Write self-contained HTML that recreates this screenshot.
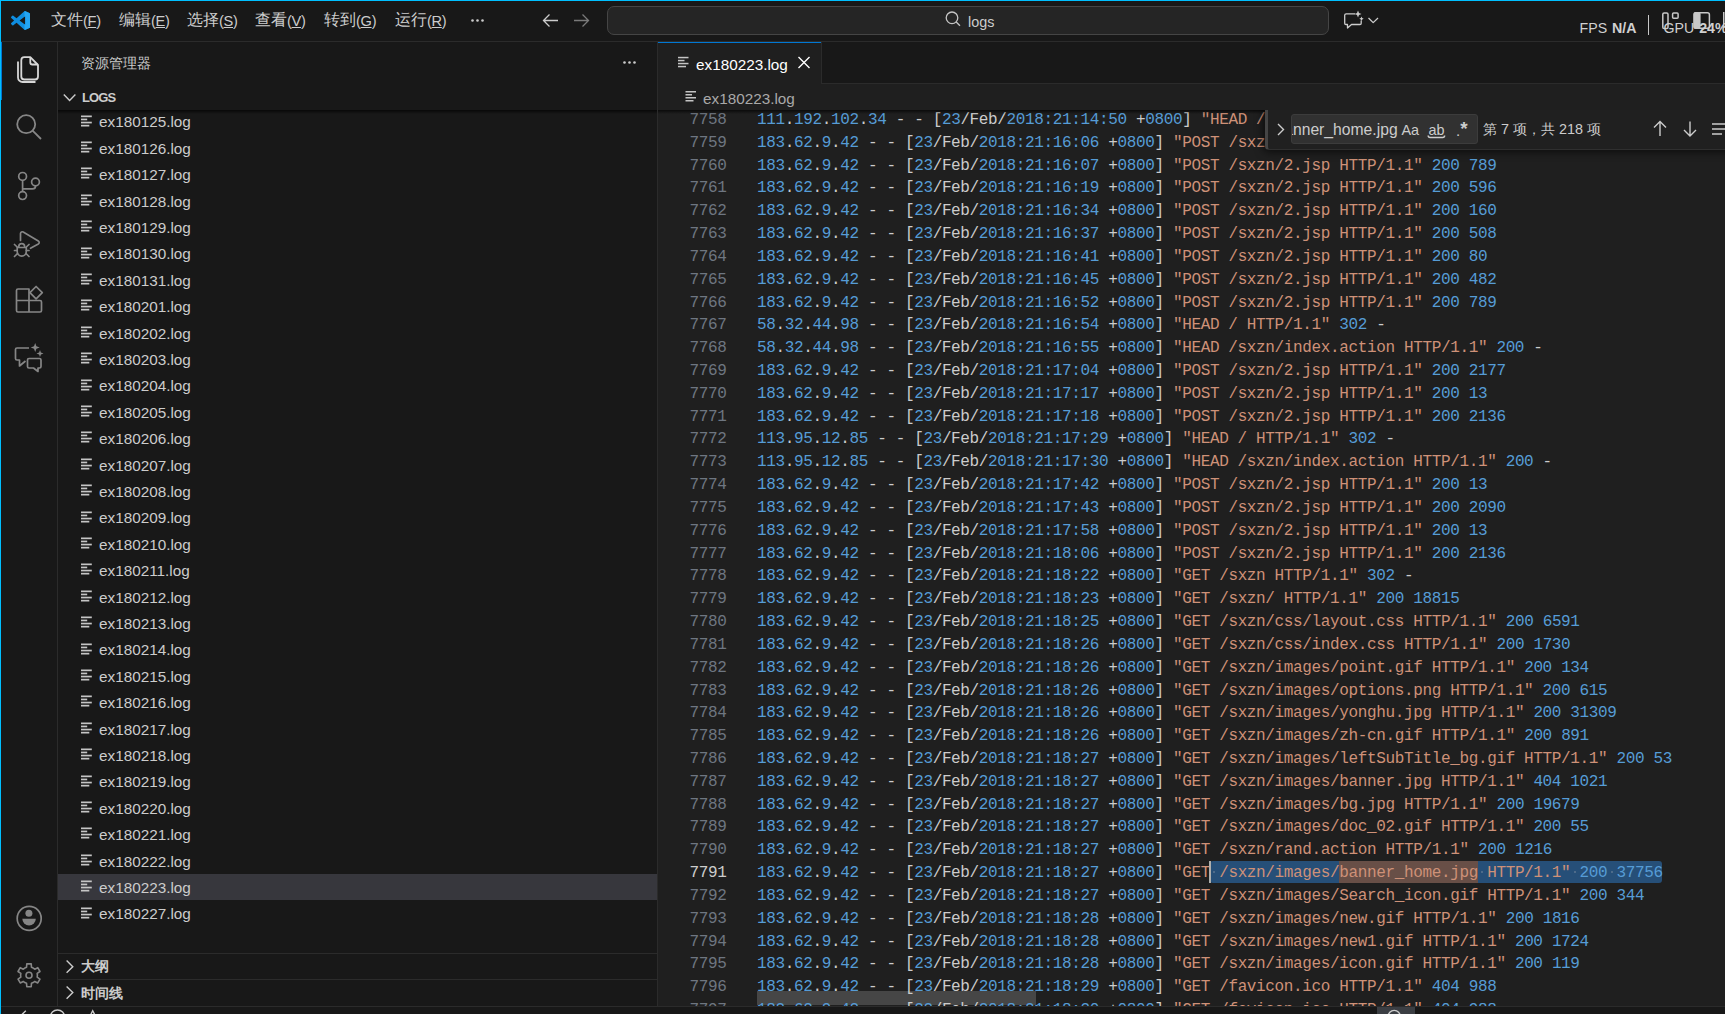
<!DOCTYPE html><html><head><meta charset="utf-8"><style>
*{margin:0;padding:0;box-sizing:border-box}
html,body{width:1725px;height:1014px;overflow:hidden;background:#181818;font-family:"Liberation Sans",sans-serif;color:#cccccc}
.abs{position:absolute}
svg{overflow:visible}
.menu{position:absolute;top:9px;font-size:15.6px;color:#cccccc;line-height:22px;white-space:nowrap}
.ln{position:absolute;left:658px;width:68.5px;text-align:right;font-family:"Liberation Mono",monospace;font-size:16px;letter-spacing:-0.36px;line-height:22.8px;color:#6e7681;white-space:pre}
.ln.cur{color:#cccccc}
.cl{position:absolute;left:757px;font-family:"Liberation Mono",monospace;font-size:16px;letter-spacing:-0.36px;line-height:22.8px;color:#cccccc;white-space:pre}
.b{color:#569cd6}
.o{color:#ce9178}
.fl{position:absolute;left:99px;height:26.4px;line-height:26.4px;font-size:15.3px;color:#cccccc;white-space:nowrap}
.hdr{position:absolute;font-size:13px;letter-spacing:-0.85px;font-weight:bold;color:#cccccc;white-space:nowrap;line-height:16px}
.hdrc{position:absolute;font-size:14px;font-weight:bold;color:#cccccc;white-space:nowrap;line-height:16px}
.tabt{position:absolute;font-size:15.3px;color:#ffffff;white-space:nowrap;line-height:22px}
.crt{position:absolute;font-size:15.3px;color:#a9a9a9;white-space:nowrap;line-height:22px}
.sbt{position:absolute;font-size:14px;color:#cccccc;white-space:nowrap;line-height:16px}
.fwt{position:absolute;font-size:15.3px;color:#cccccc;white-space:nowrap;line-height:20px}
.fwa{position:absolute;font-size:15px;color:#cccccc;white-space:nowrap;line-height:20px}
.fwc{position:absolute;font-size:14.4px;color:#cccccc;white-space:nowrap;line-height:20px}
.srch{position:absolute;font-size:14.4px;color:#cccccc;white-space:nowrap;line-height:20px}
.fps{position:absolute;font-size:14.2px;color:#d0d0d0;white-space:nowrap;line-height:20px}

</style></head><body>
<div class="abs" style="left:0;top:0;width:1725px;height:42px;background:#181818"></div>
<div class="abs" style="left:0;top:41px;width:1725px;height:1px;background:#2b2b2b"></div>
<div class="abs" style="left:57px;top:42px;width:1px;height:964px;background:#2b2b2b"></div>
<div class="abs" style="left:657px;top:42px;width:1px;height:964px;background:#2b2b2b"></div>
<div class="abs" style="left:658px;top:84px;width:1067px;height:922px;background:#1f1f1f"></div>
<div class="abs" style="left:658px;top:42px;width:1067px;height:42px;background:#181818;border-bottom:1px solid #2b2b2b"></div>
<div class="abs" style="left:658px;top:42px;width:164px;height:42px;background:#1f1f1f;border-right:1px solid #2b2b2b"></div>
<div class="abs" style="left:658px;top:42px;width:163px;height:1px;background:#0078d4"></div>
<div class="tabt" style="left:696px;top:53.5px">ex180223.log</div>
<div class="crt" style="left:703px;top:87.5px">ex180223.log</div>
<div class="abs" style="left:1210px;top:861.0px;width:451.7px;height:22px;background:#264f78;border-radius:3px"></div>
<div class="abs" style="left:1339px;top:861.0px;width:138.6px;height:22px;background:#684f47"></div>
<div class="abs" style="left:757px;top:991px;width:279px;height:14px;background:#464646"></div>
<div class="ln" style="top:108.5px">7758</div>
<div class="cl" style="top:108.5px"><span class="b">111</span>.<span class="b">192</span>.<span class="b">102</span>.<span class="b">34</span> - - [<span class="b">23</span>/Feb/<span class="b">2018:21:14:50</span> +<span class="b">0800</span>] <span class="o">"HEAD / HTTP/1.1"</span> <span class="b">302</span> -</div>
<div class="ln" style="top:131.5px">7759</div>
<div class="cl" style="top:131.5px"><span class="b">183</span>.<span class="b">62</span>.<span class="b">9</span>.<span class="b">42</span> - - [<span class="b">23</span>/Feb/<span class="b">2018:21:16:06</span> +<span class="b">0800</span>] <span class="o">"POST /sxzn/2.jsp HTTP/1.1"</span> <span class="b">200</span> <span class="b">2136</span></div>
<div class="ln" style="top:154.5px">7760</div>
<div class="cl" style="top:154.5px"><span class="b">183</span>.<span class="b">62</span>.<span class="b">9</span>.<span class="b">42</span> - - [<span class="b">23</span>/Feb/<span class="b">2018:21:16:07</span> +<span class="b">0800</span>] <span class="o">"POST /sxzn/2.jsp HTTP/1.1"</span> <span class="b">200</span> <span class="b">789</span></div>
<div class="ln" style="top:176.5px">7761</div>
<div class="cl" style="top:176.5px"><span class="b">183</span>.<span class="b">62</span>.<span class="b">9</span>.<span class="b">42</span> - - [<span class="b">23</span>/Feb/<span class="b">2018:21:16:19</span> +<span class="b">0800</span>] <span class="o">"POST /sxzn/2.jsp HTTP/1.1"</span> <span class="b">200</span> <span class="b">596</span></div>
<div class="ln" style="top:199.5px">7762</div>
<div class="cl" style="top:199.5px"><span class="b">183</span>.<span class="b">62</span>.<span class="b">9</span>.<span class="b">42</span> - - [<span class="b">23</span>/Feb/<span class="b">2018:21:16:34</span> +<span class="b">0800</span>] <span class="o">"POST /sxzn/2.jsp HTTP/1.1"</span> <span class="b">200</span> <span class="b">160</span></div>
<div class="ln" style="top:222.5px">7763</div>
<div class="cl" style="top:222.5px"><span class="b">183</span>.<span class="b">62</span>.<span class="b">9</span>.<span class="b">42</span> - - [<span class="b">23</span>/Feb/<span class="b">2018:21:16:37</span> +<span class="b">0800</span>] <span class="o">"POST /sxzn/2.jsp HTTP/1.1"</span> <span class="b">200</span> <span class="b">508</span></div>
<div class="ln" style="top:245.5px">7764</div>
<div class="cl" style="top:245.5px"><span class="b">183</span>.<span class="b">62</span>.<span class="b">9</span>.<span class="b">42</span> - - [<span class="b">23</span>/Feb/<span class="b">2018:21:16:41</span> +<span class="b">0800</span>] <span class="o">"POST /sxzn/2.jsp HTTP/1.1"</span> <span class="b">200</span> <span class="b">80</span></div>
<div class="ln" style="top:268.5px">7765</div>
<div class="cl" style="top:268.5px"><span class="b">183</span>.<span class="b">62</span>.<span class="b">9</span>.<span class="b">42</span> - - [<span class="b">23</span>/Feb/<span class="b">2018:21:16:45</span> +<span class="b">0800</span>] <span class="o">"POST /sxzn/2.jsp HTTP/1.1"</span> <span class="b">200</span> <span class="b">482</span></div>
<div class="ln" style="top:291.5px">7766</div>
<div class="cl" style="top:291.5px"><span class="b">183</span>.<span class="b">62</span>.<span class="b">9</span>.<span class="b">42</span> - - [<span class="b">23</span>/Feb/<span class="b">2018:21:16:52</span> +<span class="b">0800</span>] <span class="o">"POST /sxzn/2.jsp HTTP/1.1"</span> <span class="b">200</span> <span class="b">789</span></div>
<div class="ln" style="top:313.5px">7767</div>
<div class="cl" style="top:313.5px"><span class="b">58</span>.<span class="b">32</span>.<span class="b">44</span>.<span class="b">98</span> - - [<span class="b">23</span>/Feb/<span class="b">2018:21:16:54</span> +<span class="b">0800</span>] <span class="o">"HEAD / HTTP/1.1"</span> <span class="b">302</span> -</div>
<div class="ln" style="top:336.5px">7768</div>
<div class="cl" style="top:336.5px"><span class="b">58</span>.<span class="b">32</span>.<span class="b">44</span>.<span class="b">98</span> - - [<span class="b">23</span>/Feb/<span class="b">2018:21:16:55</span> +<span class="b">0800</span>] <span class="o">"HEAD /sxzn/index.action HTTP/1.1"</span> <span class="b">200</span> -</div>
<div class="ln" style="top:359.5px">7769</div>
<div class="cl" style="top:359.5px"><span class="b">183</span>.<span class="b">62</span>.<span class="b">9</span>.<span class="b">42</span> - - [<span class="b">23</span>/Feb/<span class="b">2018:21:17:04</span> +<span class="b">0800</span>] <span class="o">"POST /sxzn/2.jsp HTTP/1.1"</span> <span class="b">200</span> <span class="b">2177</span></div>
<div class="ln" style="top:382.5px">7770</div>
<div class="cl" style="top:382.5px"><span class="b">183</span>.<span class="b">62</span>.<span class="b">9</span>.<span class="b">42</span> - - [<span class="b">23</span>/Feb/<span class="b">2018:21:17:17</span> +<span class="b">0800</span>] <span class="o">"POST /sxzn/2.jsp HTTP/1.1"</span> <span class="b">200</span> <span class="b">13</span></div>
<div class="ln" style="top:405.5px">7771</div>
<div class="cl" style="top:405.5px"><span class="b">183</span>.<span class="b">62</span>.<span class="b">9</span>.<span class="b">42</span> - - [<span class="b">23</span>/Feb/<span class="b">2018:21:17:18</span> +<span class="b">0800</span>] <span class="o">"POST /sxzn/2.jsp HTTP/1.1"</span> <span class="b">200</span> <span class="b">2136</span></div>
<div class="ln" style="top:427.5px">7772</div>
<div class="cl" style="top:427.5px"><span class="b">113</span>.<span class="b">95</span>.<span class="b">12</span>.<span class="b">85</span> - - [<span class="b">23</span>/Feb/<span class="b">2018:21:17:29</span> +<span class="b">0800</span>] <span class="o">"HEAD / HTTP/1.1"</span> <span class="b">302</span> -</div>
<div class="ln" style="top:450.5px">7773</div>
<div class="cl" style="top:450.5px"><span class="b">113</span>.<span class="b">95</span>.<span class="b">12</span>.<span class="b">85</span> - - [<span class="b">23</span>/Feb/<span class="b">2018:21:17:30</span> +<span class="b">0800</span>] <span class="o">"HEAD /sxzn/index.action HTTP/1.1"</span> <span class="b">200</span> -</div>
<div class="ln" style="top:473.5px">7774</div>
<div class="cl" style="top:473.5px"><span class="b">183</span>.<span class="b">62</span>.<span class="b">9</span>.<span class="b">42</span> - - [<span class="b">23</span>/Feb/<span class="b">2018:21:17:42</span> +<span class="b">0800</span>] <span class="o">"POST /sxzn/2.jsp HTTP/1.1"</span> <span class="b">200</span> <span class="b">13</span></div>
<div class="ln" style="top:496.5px">7775</div>
<div class="cl" style="top:496.5px"><span class="b">183</span>.<span class="b">62</span>.<span class="b">9</span>.<span class="b">42</span> - - [<span class="b">23</span>/Feb/<span class="b">2018:21:17:43</span> +<span class="b">0800</span>] <span class="o">"POST /sxzn/2.jsp HTTP/1.1"</span> <span class="b">200</span> <span class="b">2090</span></div>
<div class="ln" style="top:519.5px">7776</div>
<div class="cl" style="top:519.5px"><span class="b">183</span>.<span class="b">62</span>.<span class="b">9</span>.<span class="b">42</span> - - [<span class="b">23</span>/Feb/<span class="b">2018:21:17:58</span> +<span class="b">0800</span>] <span class="o">"POST /sxzn/2.jsp HTTP/1.1"</span> <span class="b">200</span> <span class="b">13</span></div>
<div class="ln" style="top:542.5px">7777</div>
<div class="cl" style="top:542.5px"><span class="b">183</span>.<span class="b">62</span>.<span class="b">9</span>.<span class="b">42</span> - - [<span class="b">23</span>/Feb/<span class="b">2018:21:18:06</span> +<span class="b">0800</span>] <span class="o">"POST /sxzn/2.jsp HTTP/1.1"</span> <span class="b">200</span> <span class="b">2136</span></div>
<div class="ln" style="top:564.5px">7778</div>
<div class="cl" style="top:564.5px"><span class="b">183</span>.<span class="b">62</span>.<span class="b">9</span>.<span class="b">42</span> - - [<span class="b">23</span>/Feb/<span class="b">2018:21:18:22</span> +<span class="b">0800</span>] <span class="o">"GET /sxzn HTTP/1.1"</span> <span class="b">302</span> -</div>
<div class="ln" style="top:587.5px">7779</div>
<div class="cl" style="top:587.5px"><span class="b">183</span>.<span class="b">62</span>.<span class="b">9</span>.<span class="b">42</span> - - [<span class="b">23</span>/Feb/<span class="b">2018:21:18:23</span> +<span class="b">0800</span>] <span class="o">"GET /sxzn/ HTTP/1.1"</span> <span class="b">200</span> <span class="b">18815</span></div>
<div class="ln" style="top:610.5px">7780</div>
<div class="cl" style="top:610.5px"><span class="b">183</span>.<span class="b">62</span>.<span class="b">9</span>.<span class="b">42</span> - - [<span class="b">23</span>/Feb/<span class="b">2018:21:18:25</span> +<span class="b">0800</span>] <span class="o">"GET /sxzn/css/layout.css HTTP/1.1"</span> <span class="b">200</span> <span class="b">6591</span></div>
<div class="ln" style="top:633.5px">7781</div>
<div class="cl" style="top:633.5px"><span class="b">183</span>.<span class="b">62</span>.<span class="b">9</span>.<span class="b">42</span> - - [<span class="b">23</span>/Feb/<span class="b">2018:21:18:26</span> +<span class="b">0800</span>] <span class="o">"GET /sxzn/css/index.css HTTP/1.1"</span> <span class="b">200</span> <span class="b">1730</span></div>
<div class="ln" style="top:656.5px">7782</div>
<div class="cl" style="top:656.5px"><span class="b">183</span>.<span class="b">62</span>.<span class="b">9</span>.<span class="b">42</span> - - [<span class="b">23</span>/Feb/<span class="b">2018:21:18:26</span> +<span class="b">0800</span>] <span class="o">"GET /sxzn/images/point.gif HTTP/1.1"</span> <span class="b">200</span> <span class="b">134</span></div>
<div class="ln" style="top:679.5px">7783</div>
<div class="cl" style="top:679.5px"><span class="b">183</span>.<span class="b">62</span>.<span class="b">9</span>.<span class="b">42</span> - - [<span class="b">23</span>/Feb/<span class="b">2018:21:18:26</span> +<span class="b">0800</span>] <span class="o">"GET /sxzn/images/options.png HTTP/1.1"</span> <span class="b">200</span> <span class="b">615</span></div>
<div class="ln" style="top:701.5px">7784</div>
<div class="cl" style="top:701.5px"><span class="b">183</span>.<span class="b">62</span>.<span class="b">9</span>.<span class="b">42</span> - - [<span class="b">23</span>/Feb/<span class="b">2018:21:18:26</span> +<span class="b">0800</span>] <span class="o">"GET /sxzn/images/yonghu.jpg HTTP/1.1"</span> <span class="b">200</span> <span class="b">31309</span></div>
<div class="ln" style="top:724.5px">7785</div>
<div class="cl" style="top:724.5px"><span class="b">183</span>.<span class="b">62</span>.<span class="b">9</span>.<span class="b">42</span> - - [<span class="b">23</span>/Feb/<span class="b">2018:21:18:26</span> +<span class="b">0800</span>] <span class="o">"GET /sxzn/images/zh-cn.gif HTTP/1.1"</span> <span class="b">200</span> <span class="b">891</span></div>
<div class="ln" style="top:747.5px">7786</div>
<div class="cl" style="top:747.5px"><span class="b">183</span>.<span class="b">62</span>.<span class="b">9</span>.<span class="b">42</span> - - [<span class="b">23</span>/Feb/<span class="b">2018:21:18:27</span> +<span class="b">0800</span>] <span class="o">"GET /sxzn/images/leftSubTitle_bg.gif HTTP/1.1"</span> <span class="b">200</span> <span class="b">53</span></div>
<div class="ln" style="top:770.5px">7787</div>
<div class="cl" style="top:770.5px"><span class="b">183</span>.<span class="b">62</span>.<span class="b">9</span>.<span class="b">42</span> - - [<span class="b">23</span>/Feb/<span class="b">2018:21:18:27</span> +<span class="b">0800</span>] <span class="o">"GET /sxzn/images/banner.jpg HTTP/1.1"</span> <span class="b">404</span> <span class="b">1021</span></div>
<div class="ln" style="top:793.5px">7788</div>
<div class="cl" style="top:793.5px"><span class="b">183</span>.<span class="b">62</span>.<span class="b">9</span>.<span class="b">42</span> - - [<span class="b">23</span>/Feb/<span class="b">2018:21:18:27</span> +<span class="b">0800</span>] <span class="o">"GET /sxzn/images/bg.jpg HTTP/1.1"</span> <span class="b">200</span> <span class="b">19679</span></div>
<div class="ln" style="top:815.5px">7789</div>
<div class="cl" style="top:815.5px"><span class="b">183</span>.<span class="b">62</span>.<span class="b">9</span>.<span class="b">42</span> - - [<span class="b">23</span>/Feb/<span class="b">2018:21:18:27</span> +<span class="b">0800</span>] <span class="o">"GET /sxzn/images/doc_02.gif HTTP/1.1"</span> <span class="b">200</span> <span class="b">55</span></div>
<div class="ln" style="top:838.5px">7790</div>
<div class="cl" style="top:838.5px"><span class="b">183</span>.<span class="b">62</span>.<span class="b">9</span>.<span class="b">42</span> - - [<span class="b">23</span>/Feb/<span class="b">2018:21:18:27</span> +<span class="b">0800</span>] <span class="o">"GET /sxzn/rand.action HTTP/1.1"</span> <span class="b">200</span> <span class="b">1216</span></div>
<div class="ln cur" style="top:861.5px">7791</div>
<div class="cl" style="top:861.5px"><span class="b">183</span>.<span class="b">62</span>.<span class="b">9</span>.<span class="b">42</span> - - [<span class="b">23</span>/Feb/<span class="b">2018:21:18:27</span> +<span class="b">0800</span>] <span class="o">"GET /sxzn/images/banner_home.jpg HTTP/1.1"</span> <span class="b">200</span> <span class="b">37756</span></div>
<div class="ln" style="top:884.5px">7792</div>
<div class="cl" style="top:884.5px"><span class="b">183</span>.<span class="b">62</span>.<span class="b">9</span>.<span class="b">42</span> - - [<span class="b">23</span>/Feb/<span class="b">2018:21:18:27</span> +<span class="b">0800</span>] <span class="o">"GET /sxzn/images/Search_icon.gif HTTP/1.1"</span> <span class="b">200</span> <span class="b">344</span></div>
<div class="ln" style="top:907.5px">7793</div>
<div class="cl" style="top:907.5px"><span class="b">183</span>.<span class="b">62</span>.<span class="b">9</span>.<span class="b">42</span> - - [<span class="b">23</span>/Feb/<span class="b">2018:21:18:28</span> +<span class="b">0800</span>] <span class="o">"GET /sxzn/images/new.gif HTTP/1.1"</span> <span class="b">200</span> <span class="b">1816</span></div>
<div class="ln" style="top:930.5px">7794</div>
<div class="cl" style="top:930.5px"><span class="b">183</span>.<span class="b">62</span>.<span class="b">9</span>.<span class="b">42</span> - - [<span class="b">23</span>/Feb/<span class="b">2018:21:18:28</span> +<span class="b">0800</span>] <span class="o">"GET /sxzn/images/new1.gif HTTP/1.1"</span> <span class="b">200</span> <span class="b">1724</span></div>
<div class="ln" style="top:952.5px">7795</div>
<div class="cl" style="top:952.5px"><span class="b">183</span>.<span class="b">62</span>.<span class="b">9</span>.<span class="b">42</span> - - [<span class="b">23</span>/Feb/<span class="b">2018:21:18:28</span> +<span class="b">0800</span>] <span class="o">"GET /sxzn/images/icon.gif HTTP/1.1"</span> <span class="b">200</span> <span class="b">119</span></div>
<div class="ln" style="top:975.5px">7796</div>
<div class="cl" style="top:975.5px"><span class="b">183</span>.<span class="b">62</span>.<span class="b">9</span>.<span class="b">42</span> - - [<span class="b">23</span>/Feb/<span class="b">2018:21:18:29</span> +<span class="b">0800</span>] <span class="o">"GET /favicon.ico HTTP/1.1"</span> <span class="b">404</span> <span class="b">988</span></div>
<div class="ln" style="top:998.5px">7797</div>
<div class="cl" style="top:998.5px"><span class="b">183</span>.<span class="b">62</span>.<span class="b">9</span>.<span class="b">42</span> - - [<span class="b">23</span>/Feb/<span class="b">2018:21:18:30</span> +<span class="b">0800</span>] <span class="o">"GET /favicon.ico HTTP/1.1"</span> <span class="b">404</span> <span class="b">988</span></div>
<div class="abs" style="left:1209px;top:861.0px;width:2px;height:22px;background:#aeafad"></div>
<div class="abs" style="left:1213.4px;top:870.9px;width:2px;height:2px;background:#4d6b8a"></div>
<div class="abs" style="left:1481.3px;top:870.9px;width:2px;height:2px;background:#4d6b8a"></div>
<div class="abs" style="left:1573.7px;top:870.9px;width:2px;height:2px;background:#4d6b8a"></div>
<div class="abs" style="left:1610.7px;top:870.9px;width:2px;height:2px;background:#4d6b8a"></div>
<div class="abs" style="left:658px;top:110px;width:1067px;height:4px;background:linear-gradient(#000000aa,#00000000)"></div>
<div class="abs" style="left:1200px;top:110px;width:525px;height:80px;overflow:hidden"><div class="abs" style="left:65px;top:0;width:470px;height:40px;background:#202020;border-left:3px solid #454545;border-bottom:1px solid #2f2f2f;border-radius:0 0 0 4px;box-shadow:0 0 8px 2px rgba(0,0,0,0.6)"></div></div>
<div class="abs" style="left:1291px;top:114px;width:187px;height:30px;background:#313131;border:1px solid #3c3c3c;border-radius:3px;overflow:hidden"><div class="fwt" style="left:-16.5px;top:5px;font-size:15.7px">banner_home.jpg</div></div>
<div class="fwa" style="left:1401.5px;top:120px;font-size:14.4px">Aa</div>
<div class="fwa" style="left:1428.5px;top:120px;font-size:14.4px">ab</div>
<div class="fwa" style="left:1456px;top:120px;font-size:15px">.<span style="font-size:19px;position:relative;top:-1px;font-weight:bold">*</span></div>
<div class="fwc" style="left:1483px;top:119px">第 7 项，共 218 项</div>
<div class="sbt" style="left:81px;top:55px">资源管理器</div>
<div class="hdr" style="left:82px;top:89.5px">LOGS</div>
<div class="hdrc" style="left:81px;top:958px">大纲</div>
<div class="hdrc" style="left:81px;top:984.5px">时间线</div>
<div class="abs" style="left:58px;top:953px;width:599px;height:1px;background:#2b2b2b"></div>
<div class="abs" style="left:58px;top:979px;width:599px;height:1px;background:#2b2b2b"></div>
<div class="abs" style="left:58px;top:110px;width:599px;height:4px;background:linear-gradient(#000000aa,#00000000)"></div>
<svg class="abs" style="left:81px;top:114.5px" width="12" height="12" viewBox="0 0 12 12"><g fill="#c5c5c5"><rect x="0" y="0.5" width="10.8" height="1.7"/><rect x="0" y="3.6" width="6.2" height="1.7"/><rect x="0" y="6.7" width="10.8" height="1.7"/><rect x="0" y="9.8" width="8.3" height="1.7"/></g></svg>
<div class="fl" style="top:109.4px">ex180125.log</div>
<svg class="abs" style="left:81px;top:140.9px" width="12" height="12" viewBox="0 0 12 12"><g fill="#c5c5c5"><rect x="0" y="0.5" width="10.8" height="1.7"/><rect x="0" y="3.6" width="6.2" height="1.7"/><rect x="0" y="6.7" width="10.8" height="1.7"/><rect x="0" y="9.8" width="8.3" height="1.7"/></g></svg>
<div class="fl" style="top:135.8px">ex180126.log</div>
<svg class="abs" style="left:81px;top:167.29999999999998px" width="12" height="12" viewBox="0 0 12 12"><g fill="#c5c5c5"><rect x="0" y="0.5" width="10.8" height="1.7"/><rect x="0" y="3.6" width="6.2" height="1.7"/><rect x="0" y="6.7" width="10.8" height="1.7"/><rect x="0" y="9.8" width="8.3" height="1.7"/></g></svg>
<div class="fl" style="top:162.2px">ex180127.log</div>
<svg class="abs" style="left:81px;top:193.7px" width="12" height="12" viewBox="0 0 12 12"><g fill="#c5c5c5"><rect x="0" y="0.5" width="10.8" height="1.7"/><rect x="0" y="3.6" width="6.2" height="1.7"/><rect x="0" y="6.7" width="10.8" height="1.7"/><rect x="0" y="9.8" width="8.3" height="1.7"/></g></svg>
<div class="fl" style="top:188.6px">ex180128.log</div>
<svg class="abs" style="left:81px;top:220.1px" width="12" height="12" viewBox="0 0 12 12"><g fill="#c5c5c5"><rect x="0" y="0.5" width="10.8" height="1.7"/><rect x="0" y="3.6" width="6.2" height="1.7"/><rect x="0" y="6.7" width="10.8" height="1.7"/><rect x="0" y="9.8" width="8.3" height="1.7"/></g></svg>
<div class="fl" style="top:215.0px">ex180129.log</div>
<svg class="abs" style="left:81px;top:246.5px" width="12" height="12" viewBox="0 0 12 12"><g fill="#c5c5c5"><rect x="0" y="0.5" width="10.8" height="1.7"/><rect x="0" y="3.6" width="6.2" height="1.7"/><rect x="0" y="6.7" width="10.8" height="1.7"/><rect x="0" y="9.8" width="8.3" height="1.7"/></g></svg>
<div class="fl" style="top:241.4px">ex180130.log</div>
<svg class="abs" style="left:81px;top:272.9px" width="12" height="12" viewBox="0 0 12 12"><g fill="#c5c5c5"><rect x="0" y="0.5" width="10.8" height="1.7"/><rect x="0" y="3.6" width="6.2" height="1.7"/><rect x="0" y="6.7" width="10.8" height="1.7"/><rect x="0" y="9.8" width="8.3" height="1.7"/></g></svg>
<div class="fl" style="top:267.8px">ex180131.log</div>
<svg class="abs" style="left:81px;top:299.3px" width="12" height="12" viewBox="0 0 12 12"><g fill="#c5c5c5"><rect x="0" y="0.5" width="10.8" height="1.7"/><rect x="0" y="3.6" width="6.2" height="1.7"/><rect x="0" y="6.7" width="10.8" height="1.7"/><rect x="0" y="9.8" width="8.3" height="1.7"/></g></svg>
<div class="fl" style="top:294.2px">ex180201.log</div>
<svg class="abs" style="left:81px;top:325.70000000000005px" width="12" height="12" viewBox="0 0 12 12"><g fill="#c5c5c5"><rect x="0" y="0.5" width="10.8" height="1.7"/><rect x="0" y="3.6" width="6.2" height="1.7"/><rect x="0" y="6.7" width="10.8" height="1.7"/><rect x="0" y="9.8" width="8.3" height="1.7"/></g></svg>
<div class="fl" style="top:320.6px">ex180202.log</div>
<svg class="abs" style="left:81px;top:352.1px" width="12" height="12" viewBox="0 0 12 12"><g fill="#c5c5c5"><rect x="0" y="0.5" width="10.8" height="1.7"/><rect x="0" y="3.6" width="6.2" height="1.7"/><rect x="0" y="6.7" width="10.8" height="1.7"/><rect x="0" y="9.8" width="8.3" height="1.7"/></g></svg>
<div class="fl" style="top:347.0px">ex180203.log</div>
<svg class="abs" style="left:81px;top:378.5px" width="12" height="12" viewBox="0 0 12 12"><g fill="#c5c5c5"><rect x="0" y="0.5" width="10.8" height="1.7"/><rect x="0" y="3.6" width="6.2" height="1.7"/><rect x="0" y="6.7" width="10.8" height="1.7"/><rect x="0" y="9.8" width="8.3" height="1.7"/></g></svg>
<div class="fl" style="top:373.4px">ex180204.log</div>
<svg class="abs" style="left:81px;top:404.9px" width="12" height="12" viewBox="0 0 12 12"><g fill="#c5c5c5"><rect x="0" y="0.5" width="10.8" height="1.7"/><rect x="0" y="3.6" width="6.2" height="1.7"/><rect x="0" y="6.7" width="10.8" height="1.7"/><rect x="0" y="9.8" width="8.3" height="1.7"/></g></svg>
<div class="fl" style="top:399.8px">ex180205.log</div>
<svg class="abs" style="left:81px;top:431.29999999999995px" width="12" height="12" viewBox="0 0 12 12"><g fill="#c5c5c5"><rect x="0" y="0.5" width="10.8" height="1.7"/><rect x="0" y="3.6" width="6.2" height="1.7"/><rect x="0" y="6.7" width="10.8" height="1.7"/><rect x="0" y="9.8" width="8.3" height="1.7"/></g></svg>
<div class="fl" style="top:426.2px">ex180206.log</div>
<svg class="abs" style="left:81px;top:457.70000000000005px" width="12" height="12" viewBox="0 0 12 12"><g fill="#c5c5c5"><rect x="0" y="0.5" width="10.8" height="1.7"/><rect x="0" y="3.6" width="6.2" height="1.7"/><rect x="0" y="6.7" width="10.8" height="1.7"/><rect x="0" y="9.8" width="8.3" height="1.7"/></g></svg>
<div class="fl" style="top:452.6px">ex180207.log</div>
<svg class="abs" style="left:81px;top:484.1px" width="12" height="12" viewBox="0 0 12 12"><g fill="#c5c5c5"><rect x="0" y="0.5" width="10.8" height="1.7"/><rect x="0" y="3.6" width="6.2" height="1.7"/><rect x="0" y="6.7" width="10.8" height="1.7"/><rect x="0" y="9.8" width="8.3" height="1.7"/></g></svg>
<div class="fl" style="top:479.0px">ex180208.log</div>
<svg class="abs" style="left:81px;top:510.5px" width="12" height="12" viewBox="0 0 12 12"><g fill="#c5c5c5"><rect x="0" y="0.5" width="10.8" height="1.7"/><rect x="0" y="3.6" width="6.2" height="1.7"/><rect x="0" y="6.7" width="10.8" height="1.7"/><rect x="0" y="9.8" width="8.3" height="1.7"/></g></svg>
<div class="fl" style="top:505.4px">ex180209.log</div>
<svg class="abs" style="left:81px;top:536.9px" width="12" height="12" viewBox="0 0 12 12"><g fill="#c5c5c5"><rect x="0" y="0.5" width="10.8" height="1.7"/><rect x="0" y="3.6" width="6.2" height="1.7"/><rect x="0" y="6.7" width="10.8" height="1.7"/><rect x="0" y="9.8" width="8.3" height="1.7"/></g></svg>
<div class="fl" style="top:531.8px">ex180210.log</div>
<svg class="abs" style="left:81px;top:563.3px" width="12" height="12" viewBox="0 0 12 12"><g fill="#c5c5c5"><rect x="0" y="0.5" width="10.8" height="1.7"/><rect x="0" y="3.6" width="6.2" height="1.7"/><rect x="0" y="6.7" width="10.8" height="1.7"/><rect x="0" y="9.8" width="8.3" height="1.7"/></g></svg>
<div class="fl" style="top:558.2px">ex180211.log</div>
<svg class="abs" style="left:81px;top:589.7px" width="12" height="12" viewBox="0 0 12 12"><g fill="#c5c5c5"><rect x="0" y="0.5" width="10.8" height="1.7"/><rect x="0" y="3.6" width="6.2" height="1.7"/><rect x="0" y="6.7" width="10.8" height="1.7"/><rect x="0" y="9.8" width="8.3" height="1.7"/></g></svg>
<div class="fl" style="top:584.6px">ex180212.log</div>
<svg class="abs" style="left:81px;top:616.1px" width="12" height="12" viewBox="0 0 12 12"><g fill="#c5c5c5"><rect x="0" y="0.5" width="10.8" height="1.7"/><rect x="0" y="3.6" width="6.2" height="1.7"/><rect x="0" y="6.7" width="10.8" height="1.7"/><rect x="0" y="9.8" width="8.3" height="1.7"/></g></svg>
<div class="fl" style="top:611.0px">ex180213.log</div>
<svg class="abs" style="left:81px;top:642.5px" width="12" height="12" viewBox="0 0 12 12"><g fill="#c5c5c5"><rect x="0" y="0.5" width="10.8" height="1.7"/><rect x="0" y="3.6" width="6.2" height="1.7"/><rect x="0" y="6.7" width="10.8" height="1.7"/><rect x="0" y="9.8" width="8.3" height="1.7"/></g></svg>
<div class="fl" style="top:637.4px">ex180214.log</div>
<svg class="abs" style="left:81px;top:668.9px" width="12" height="12" viewBox="0 0 12 12"><g fill="#c5c5c5"><rect x="0" y="0.5" width="10.8" height="1.7"/><rect x="0" y="3.6" width="6.2" height="1.7"/><rect x="0" y="6.7" width="10.8" height="1.7"/><rect x="0" y="9.8" width="8.3" height="1.7"/></g></svg>
<div class="fl" style="top:663.8px">ex180215.log</div>
<svg class="abs" style="left:81px;top:695.3px" width="12" height="12" viewBox="0 0 12 12"><g fill="#c5c5c5"><rect x="0" y="0.5" width="10.8" height="1.7"/><rect x="0" y="3.6" width="6.2" height="1.7"/><rect x="0" y="6.7" width="10.8" height="1.7"/><rect x="0" y="9.8" width="8.3" height="1.7"/></g></svg>
<div class="fl" style="top:690.2px">ex180216.log</div>
<svg class="abs" style="left:81px;top:721.6999999999999px" width="12" height="12" viewBox="0 0 12 12"><g fill="#c5c5c5"><rect x="0" y="0.5" width="10.8" height="1.7"/><rect x="0" y="3.6" width="6.2" height="1.7"/><rect x="0" y="6.7" width="10.8" height="1.7"/><rect x="0" y="9.8" width="8.3" height="1.7"/></g></svg>
<div class="fl" style="top:716.6px">ex180217.log</div>
<svg class="abs" style="left:81px;top:748.0999999999999px" width="12" height="12" viewBox="0 0 12 12"><g fill="#c5c5c5"><rect x="0" y="0.5" width="10.8" height="1.7"/><rect x="0" y="3.6" width="6.2" height="1.7"/><rect x="0" y="6.7" width="10.8" height="1.7"/><rect x="0" y="9.8" width="8.3" height="1.7"/></g></svg>
<div class="fl" style="top:743.0px">ex180218.log</div>
<svg class="abs" style="left:81px;top:774.5px" width="12" height="12" viewBox="0 0 12 12"><g fill="#c5c5c5"><rect x="0" y="0.5" width="10.8" height="1.7"/><rect x="0" y="3.6" width="6.2" height="1.7"/><rect x="0" y="6.7" width="10.8" height="1.7"/><rect x="0" y="9.8" width="8.3" height="1.7"/></g></svg>
<div class="fl" style="top:769.4px">ex180219.log</div>
<svg class="abs" style="left:81px;top:800.9px" width="12" height="12" viewBox="0 0 12 12"><g fill="#c5c5c5"><rect x="0" y="0.5" width="10.8" height="1.7"/><rect x="0" y="3.6" width="6.2" height="1.7"/><rect x="0" y="6.7" width="10.8" height="1.7"/><rect x="0" y="9.8" width="8.3" height="1.7"/></g></svg>
<div class="fl" style="top:795.8px">ex180220.log</div>
<svg class="abs" style="left:81px;top:827.3px" width="12" height="12" viewBox="0 0 12 12"><g fill="#c5c5c5"><rect x="0" y="0.5" width="10.8" height="1.7"/><rect x="0" y="3.6" width="6.2" height="1.7"/><rect x="0" y="6.7" width="10.8" height="1.7"/><rect x="0" y="9.8" width="8.3" height="1.7"/></g></svg>
<div class="fl" style="top:822.2px">ex180221.log</div>
<svg class="abs" style="left:81px;top:853.6999999999999px" width="12" height="12" viewBox="0 0 12 12"><g fill="#c5c5c5"><rect x="0" y="0.5" width="10.8" height="1.7"/><rect x="0" y="3.6" width="6.2" height="1.7"/><rect x="0" y="6.7" width="10.8" height="1.7"/><rect x="0" y="9.8" width="8.3" height="1.7"/></g></svg>
<div class="fl" style="top:848.6px">ex180222.log</div>
<div class="abs" style="left:58px;top:874.0px;width:599px;height:26.4px;background:#37373d"></div>
<svg class="abs" style="left:81px;top:880.0999999999999px" width="12" height="12" viewBox="0 0 12 12"><g fill="#c5c5c5"><rect x="0" y="0.5" width="10.8" height="1.7"/><rect x="0" y="3.6" width="6.2" height="1.7"/><rect x="0" y="6.7" width="10.8" height="1.7"/><rect x="0" y="9.8" width="8.3" height="1.7"/></g></svg>
<div class="fl" style="top:875.0px">ex180223.log</div>
<svg class="abs" style="left:81px;top:906.5px" width="12" height="12" viewBox="0 0 12 12"><g fill="#c5c5c5"><rect x="0" y="0.5" width="10.8" height="1.7"/><rect x="0" y="3.6" width="6.2" height="1.7"/><rect x="0" y="6.7" width="10.8" height="1.7"/><rect x="0" y="9.8" width="8.3" height="1.7"/></g></svg>
<div class="fl" style="top:901.4px">ex180227.log</div>
<div class="menu" style="left:51px">文件<span style="letter-spacing:-0.3px;font-size:14.6px;position:relative;top:1px">(<u>F</u>)</span></div>
<div class="menu" style="left:119px">编辑<span style="letter-spacing:-0.3px;font-size:14.6px;position:relative;top:1px">(<u>E</u>)</span></div>
<div class="menu" style="left:187px">选择<span style="letter-spacing:-0.3px;font-size:14.6px;position:relative;top:1px">(<u>S</u>)</span></div>
<div class="menu" style="left:255px">查看<span style="letter-spacing:-0.3px;font-size:14.6px;position:relative;top:1px">(<u>V</u>)</span></div>
<div class="menu" style="left:324px">转到<span style="letter-spacing:-0.3px;font-size:14.6px;position:relative;top:1px">(<u>G</u>)</span></div>
<div class="menu" style="left:395px">运行<span style="letter-spacing:-0.3px;font-size:14.6px;position:relative;top:1px">(<u>R</u>)</span></div>
<div class="abs" style="left:607px;top:6px;width:722px;height:29px;background:#252525;border:1px solid #454545;border-radius:7px"></div>
<div class="srch" style="left:968px;top:12px">logs</div>
<div class="abs" style="left:0;top:1006px;width:1725px;height:8px;background:#181818;border-top:1px solid #2b2b2b"></div>
<div class="abs" style="left:1377px;top:1007px;width:38px;height:7px;background:#3b3e43"></div>
<svg class="abs" style="left:0;top:0" width="1725" height="1014" viewBox="0 0 1725 1014"><defs><clipPath id="vbar"><rect x="71" y="0" width="40" height="100"/></clipPath></defs><g transform="translate(11,11) scale(0.19)"><path fill="#0f8ddf" fill-rule="evenodd" d="M96.46 10.8L75.86.87a6.23 6.23 0 0 0-7.1 1.2L29.35 38.04 12.19 25.01a4.16 4.16 0 0 0-5.32.24L1.36 30.26a4.16 4.16 0 0 0 0 6.16L16.24 50 1.36 63.58a4.16 4.16 0 0 0 0 6.16l5.5 5.01a4.16 4.16 0 0 0 5.32.24l17.16-13.03 39.41 35.96a6.23 6.23 0 0 0 7.1 1.2l20.6-9.92a6.24 6.24 0 0 0 3.54-5.63V16.43a6.24 6.24 0 0 0-3.53-5.63zM75.02 72.7L45.11 50l29.9-22.7v45.4z"/><path clip-path="url(#vbar)" fill="#24a5f3" fill-rule="evenodd" d="M96.46 10.8L75.86.87a6.23 6.23 0 0 0-7.1 1.2L29.35 38.04 12.19 25.01a4.16 4.16 0 0 0-5.32.24L1.36 30.26a4.16 4.16 0 0 0 0 6.16L16.24 50 1.36 63.58a4.16 4.16 0 0 0 0 6.16l5.5 5.01a4.16 4.16 0 0 0 5.32.24l17.16-13.03 39.41 35.96a6.23 6.23 0 0 0 7.1 1.2l20.6-9.92a6.24 6.24 0 0 0 3.54-5.63V16.43a6.24 6.24 0 0 0-3.53-5.63zM75.02 72.7L45.11 50l29.9-22.7v45.4z"/></g><circle cx="472.5" cy="20.5" r="1.3" fill="#cccccc"/><circle cx="477.5" cy="20.5" r="1.3" fill="#cccccc"/><circle cx="482.5" cy="20.5" r="1.3" fill="#cccccc"/><g stroke="#cccccc" stroke-width="1.3" fill="none"><path d="M543.5,20.5 H558 M549.5,14.5 L543.5,20.5 L549.5,26.5"/></g><g stroke="#7a7a7a" stroke-width="1.3" fill="none"><path d="M574,20.5 H588.5 M582.5,14.5 L588.5,20.5 L582.5,26.5"/></g><g stroke="#c5c5c5" stroke-width="1.3" fill="none"><circle cx="952" cy="17.8" r="5.8"/><path d="M956.2,22 L960,25.8"/></g><g stroke="#cccccc" stroke-width="1.3" fill="none" stroke-linejoin="round"><path d="M1355,13.8 H1346.2 a1.5,1.5 0 0 0 -1.5,1.5 V23.3 a1.2,1.2 0 0 0 1.2,1.2 H1347.5 V28 L1351.5,24.5 H1360 a1.2,1.2 0 0 0 1.2,-1.2 V20.5"/><path d="M1368.5,18 L1373.2,22.6 L1378,18"/></g><path fill="#cccccc" d="M1358,10.5 L1359,13 L1361.5,14 L1359,15 L1358,17.5 L1357,15 L1354.5,14 L1357,13Z M1361.5,16.5 L1362.2,18 L1363.7,18.7 L1362.2,19.4 L1361.5,21 L1360.8,19.4 L1359.3,18.7 L1360.8,18Z"/><g stroke="#c8c8c8" stroke-width="1.5" fill="none"><rect x="1662.8" y="13" width="5.2" height="15.5" rx="1.3"/><rect x="1672.6" y="13" width="5.5" height="5.2" rx="1"/></g><g stroke="#c8c8c8" stroke-width="1.5" fill="none"><rect x="1694.2" y="12.8" width="15.2" height="15.5" rx="2"/></g><rect x="1693.4" y="12" width="7.2" height="17" rx="2" fill="#c8c8c8"/><rect x="1723" y="12" width="1.5" height="16" fill="#c8c8c8"/><g stroke="#d7d7d7" stroke-width="1.8" fill="none" stroke-linejoin="round"><path d="M21.3,61 V76.5 a3,3 0 0 0 3,3 H35 a3,3 0 0 0 3,-3 V65 L30.3,57.2 H24.3 a3,3 0 0 0 -3,3Z"/><path d="M30.3,57.2 V62.5 a2,2 0 0 0 2,2 H38"/><path d="M18,61.5 V77.5 a4.5,4.5 0 0 0 4.5,4.5 H35.5"/></g><g stroke="#868686" stroke-width="1.8" fill="none"><circle cx="26.2" cy="124.2" r="9"/><path d="M32.6,130.6 L41,139"/></g><g stroke="#868686" stroke-width="1.7" fill="none"><circle cx="22.6" cy="176.4" r="3.9"/><circle cx="35.5" cy="182" r="3.9"/><circle cx="22.6" cy="195.6" r="3.9"/><path d="M22.6,180.3 V191.7 M35.5,185.9 a3,3 0 0 1 -3,3 H22.6"/></g><g stroke="#868686" stroke-width="1.7" fill="none" stroke-linejoin="round" stroke-linecap="round"><path d="M20.5,240.5 V233.5 a1.8,1.8 0 0 1 2.7,-1.5 L38.3,241 a1.8,1.8 0 0 1 0,3.1 L30.5,248.3"/><path d="M18.8,246.5 a2.9,2.9 0 0 1 5.8,0"/><path d="M17.2,247.5 H26.3 V251.5 a4.55,4.55 0 0 1 -9.1,0Z"/><path d="M14.5,244.5 L17.2,247 M14.5,250.5 H17.2 M14.5,256.5 L17.5,253.5 M29,244.5 L26.3,247 M29,250.5 H26.3 M29,256.5 L26,253.5"/></g><g stroke="#868686" stroke-width="1.7" fill="none" stroke-linejoin="round"><path d="M18,289 H29 V312 H18 a1.5,1.5 0 0 1 -1.5,-1.5 V290.5 a1.5,1.5 0 0 1 1.5,-1.5Z M16.5,300.5 H40 a1.5,1.5 0 0 1 1.5,1.5 V310.5 a1.5,1.5 0 0 1 -1.5,1.5 H29"/><path d="M36.1,286.5 L42.3,292.7 L36.1,298.9 L29.9,292.7Z"/></g><g stroke="#868686" stroke-width="1.7" fill="none" stroke-linejoin="round"><path d="M29,348 H17 a1.5,1.5 0 0 0 -1.5,1.5 V358.5 a1.5,1.5 0 0 0 1.5,1.5 H19.5 V366 L25.5,361"/><path d="M29,358.5 H39.5 a1.5,1.5 0 0 1 1.5,1.5 V366.5 a1.5,1.5 0 0 1 -1.5,1.5 H38 V371.5 L33.5,368 H29 a1.5,1.5 0 0 1 -1.5,-1.5 V360 a1.5,1.5 0 0 1 1.5,-1.5Z"/></g><path fill="#868686" d="M35.2,343 L36.4,346.3 L39.7,347.5 L36.4,348.7 L35.2,352 L34,348.7 L30.7,347.5 L34,346.3Z M40,350 L40.9,352.6 L43.5,353.5 L40.9,354.4 L40,357 L39.1,354.4 L36.5,353.5 L39.1,352.6Z"/><g stroke="#868686" stroke-width="1.7" fill="none"><circle cx="29.2" cy="918.4" r="12"/></g><circle cx="28.9" cy="913.3" r="3.5" fill="#868686"/><path fill="#868686" d="M22.3,918.8 H35.8 a6.75,6.75 0 0 1 -13.5,0Z"/><path d="M24.80,968.03 L26.54,967.27 L26.79,963.91 L31.21,963.91 L31.46,967.27 L33.20,968.03 L34.73,969.16 L37.75,967.69 L39.97,971.52 L37.18,973.41 L37.40,975.30 L37.18,977.19 L39.97,979.08 L37.75,982.91 L34.73,981.44 L33.20,982.57 L31.46,983.33 L31.21,986.69 L26.79,986.69 L26.54,983.33 L24.80,982.57 L23.27,981.44 L20.25,982.91 L18.03,979.08 L20.82,977.19 L20.60,975.30 L20.82,973.41 L18.03,971.52 L20.25,967.69 L23.27,969.16Z" stroke="#868686" stroke-width="1.6" fill="none" stroke-linejoin="round"/><circle cx="29" cy="975.3" r="3" stroke="#868686" stroke-width="1.6" fill="none"/><circle cx="624.5" cy="62.5" r="1.3" fill="#cccccc"/><circle cx="629.5" cy="62.5" r="1.3" fill="#cccccc"/><circle cx="634.5" cy="62.5" r="1.3" fill="#cccccc"/><g stroke="#cccccc" stroke-width="1.4" fill="none"><path d="M63.8,94.4 L69.6,100.4 L75.4,94.4"/><path d="M66.6,960.6 L72.8,966.7 L66.6,972.8"/><path d="M66.6,986.5 L72.8,992.6 L66.6,998.7"/></g><g fill="#c5c5c5"><rect x="678" y="56.8" width="10.5" height="1.5"/><rect x="678" y="59.8" width="6.5" height="1.5"/><rect x="678" y="62.8" width="10.5" height="1.5"/><rect x="678" y="65.8" width="8" height="1.5"/></g><g stroke="#ffffff" stroke-width="1.4"><path d="M798.5,57 L809.5,68 M809.5,57 L798.5,68"/></g><g fill="#c5c5c5"><rect x="685.5" y="91" width="10.5" height="1.5"/><rect x="685.5" y="94" width="6.5" height="1.5"/><rect x="685.5" y="97" width="10.5" height="1.5"/><rect x="685.5" y="100" width="8" height="1.5"/></g><g stroke="#cccccc" stroke-width="1.4" fill="none"><path d="M1278,124 L1283.5,129.5 L1278,135"/><path d="M1660,121.5 V136 M1654,127.5 L1660,121.5 L1666,127.5"/><path d="M1690,121.5 V136 M1684,130 L1690,136 L1696,130"/><path d="M1712,124 H1725 M1712,129 H1725 M1712,134 H1722"/><path d="M1428.2,135.6 a2,2 0 0 0 2,2 H1442.6 a2,2 0 0 0 2,-2" stroke-width="1.5"/></g><g stroke="#cccccc" stroke-width="1.4" fill="none"><path d="M25.8,1010.8 L21,1015.5"/><circle cx="57.5" cy="1017.2" r="7.2"/><path d="M89,1018 L92.7,1010.8 L96.4,1018"/><circle cx="1394.2" cy="1016.6" r="6.2"/></g></svg>
<div class="fps" style="left:1579.5px;top:17.5px">FPS <b style="margin-left:1px">N/A</b></div>
<div class="abs" style="left:1648px;top:15px;width:1px;height:20px;background:#c8c8c8"></div>
<div class="fps" style="left:1663.5px;top:17.5px">GPU <b style="margin-left:1px">24%</b></div>
<div class="abs" style="left:0;top:0;width:1725px;height:1px;background:#00bfff"></div>
<div class="abs" style="left:0;top:0;width:1px;height:1014px;background:#00bfff"></div>
<div class="abs" style="left:1px;top:42px;width:1px;height:58px;background:#0078d4"></div>
</body></html>
